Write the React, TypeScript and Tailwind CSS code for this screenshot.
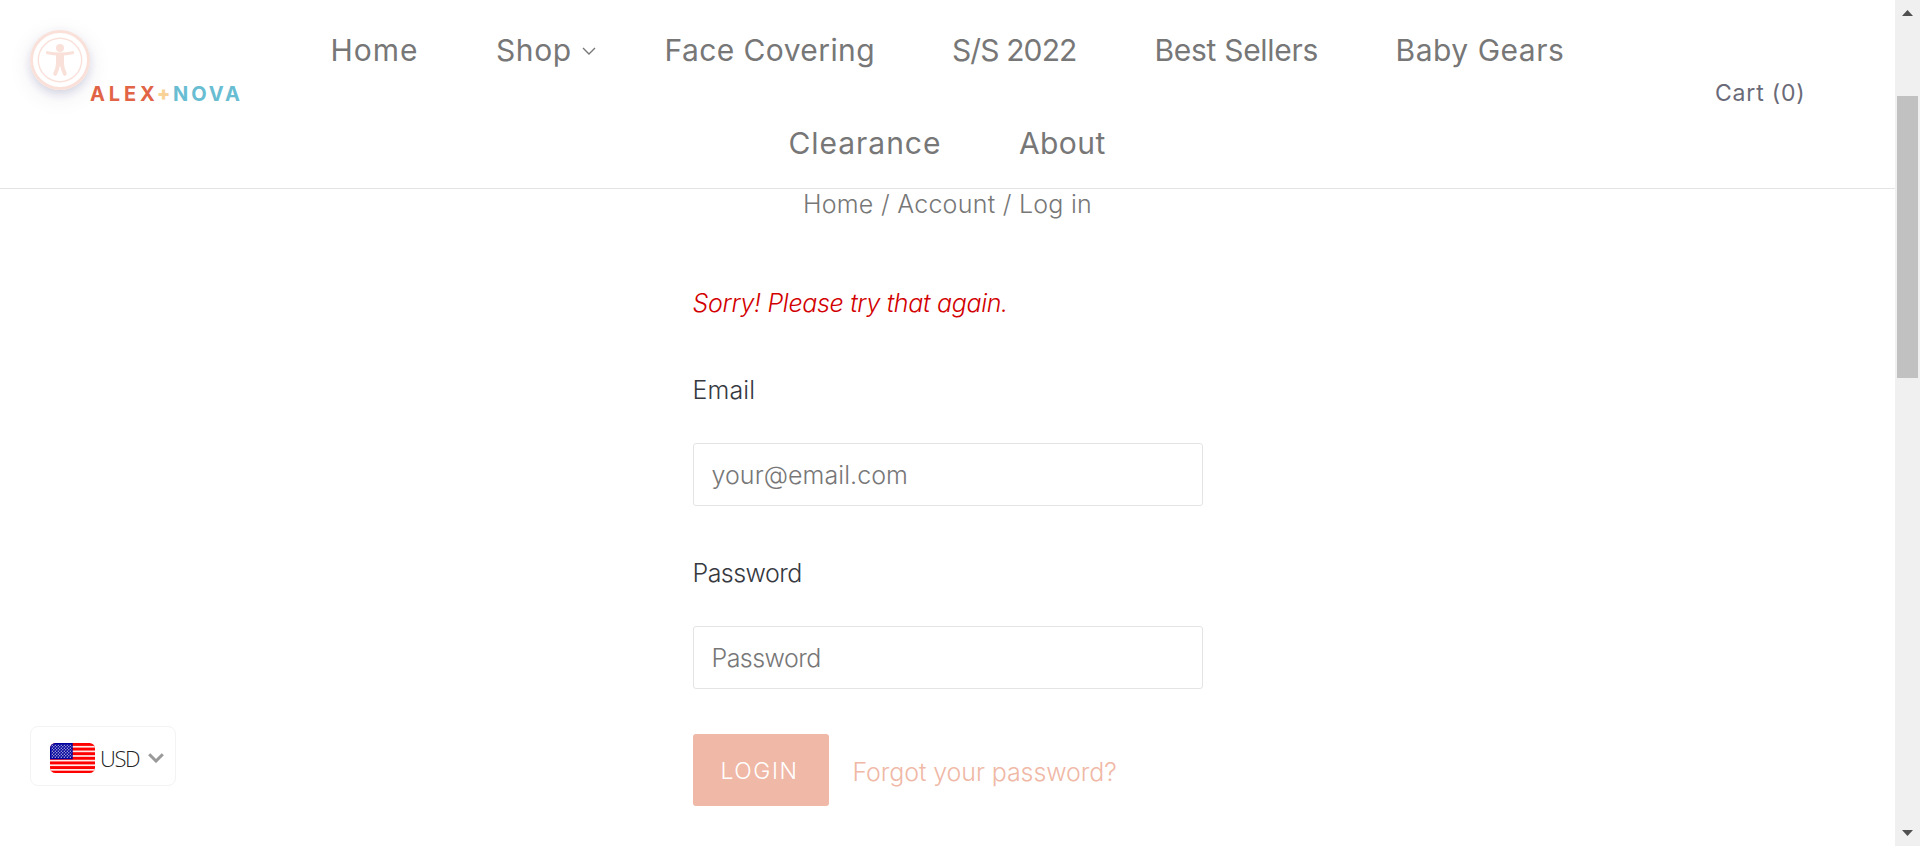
import React from "react";

const primaryLinks = [
  { label: "Home", cls: "w-[166px] pl-[1.5px] tracking-[1px]" },
  { label: "Shop", cls: "w-[168px] pl-[1px] tracking-[0.6px]", menu: true },
  { label: "Face Covering", cls: "w-[289px] pl-[1.5px] tracking-[0.42px]" },
  { label: "S/S 2022", cls: "w-[201px] tracking-[-0.89px]" },
  { label: "Best Sellers", cls: "w-[241px] pl-[1.5px] tracking-[-0.3px]" },
  { label: "Baby Gears", cls: "w-[172px] pl-[1.5px] tracking-[0.52px]" },
];

function AccessibilityButton() {
  return (
    <button
      aria-label="Accessibility"
      className="absolute left-[30px] top-[30px] size-[60px] rounded-full bg-white shadow-[0_4px_8px_rgba(60,60,130,0.16),0_6px_24px_rgba(60,60,110,0.09)]"
    >
      <svg viewBox="0 0 60 60" className="size-[60px]" fill="none" stroke="#f9e1da">
        <circle cx="30" cy="30" r="28.5" strokeWidth="3" />
        <circle cx="30" cy="30" r="21.7" strokeWidth="1.4" />
        <circle cx="30" cy="18" r="4" fill="#f9e1da" stroke="none" />
        <path d="M17.5 22.7 Q30 25.3 42.5 22.7" strokeWidth="3.2" strokeLinecap="round" />
        <path d="M26 23.5h8v11l-1.5 2h-5l-1.5-2z" fill="#f9e1da" stroke="none" />
        <path d="M28 33.5Q27.8 39 25.2 43.8M32 33.5Q32.2 39 34.8 43.8" strokeWidth="4" strokeLinecap="round" />
      </svg>
    </button>
  );
}

function Flag() {
  return (
    <svg viewBox="0 0 45 30" className="h-[30px] w-[45px] shrink-0">
      <defs>
        <clipPath id="flag-round">
          <rect width="45" height="30" rx="5.5" />
        </clipPath>
        <pattern id="flag-stars" width="3" height="3" patternUnits="userSpaceOnUse">
          <circle cx="0.8" cy="0.8" r="0.7" fill="#bcbce0" />
          <circle cx="2.3" cy="2.3" r="0.7" fill="#bcbce0" />
        </pattern>
      </defs>
      <g clipPath="url(#flag-round)">
        <rect width="45" height="30" fill="#ff0000" />
        {[0, 1, 2, 3, 4, 5].map((i) => (
          <rect key={i} y={2.9 + i * 4.62} width="45" height="1.7" fill="#ffe9e9" />
        ))}
        <rect width="22.7" height="16.3" fill="#00009c" />
        <rect x="1.2" y="1.5" width="20.3" height="13.5" fill="url(#flag-stars)" />
      </g>
    </svg>
  );
}

function Scrollbar() {
  return (
    <div className="flex w-[25px] shrink-0 flex-col items-center bg-[#f0f0f0]">
      <svg viewBox="0 0 11 6" className="mt-[10px] h-[6px] w-[11px]" fill="#505050">
        <path d="M5.5 0 11 6H0z" />
      </svg>
      <div className="mt-[80px] h-[282px] w-[21px] bg-[#c1c1c1]" />
      <svg viewBox="0 0 11 6" className="mb-[10px] mt-auto h-[6px] w-[11px]" fill="#505050">
        <path d="M5.5 6 11 0H0z" />
      </svg>
    </div>
  );
}

export default function App() {
  return (
    <div className="relative flex h-[846px] w-full overflow-hidden bg-white font-['Inter',sans-serif]">
      <div className="flex min-w-0 flex-1 flex-col">
        <header className="flex h-[189px] shrink-0 border-b border-[#e3e4e4] bg-white">
          <div className="flex w-[329px] items-center pl-[90px] text-[20px] font-bold leading-[30px]">
            <span className="w-[67px] tracking-[3.9px] text-[#e26446]">ALEX</span>
            <span className="w-[16px] text-[19px] font-black text-[#f8d296]">+</span>
            <span className="tracking-[2.9px] text-[#69bdd2]">NOVA</span>
          </div>
          <nav className="w-[1237px] pt-[3px] text-[30px] leading-[94px] text-[#777777]">
            <ul className="flex h-[93px]">
              {primaryLinks.map((l) => (
                <li key={l.label} className={`flex shrink-0 items-center whitespace-nowrap ${l.cls}`}>
                  {l.label}
                  {l.menu && (
                    <svg viewBox="0 0 14 8" className="ml-[10px] mt-[2px] h-[8px] w-[14px]" fill="none" stroke="#777777" strokeWidth="1.4">
                      <path d="M1 1l6 6 6-6" />
                    </svg>
                  )}
                </li>
              ))}
            </ul>
            <ul className="flex h-[92px] pl-[459px]">
              <li className="w-[231px] pl-[0.5px] tracking-[0.95px]">Clearance</li>
              <li className="tracking-[0.4px]">About</li>
            </ul>
          </nav>
          <div className="flex flex-1 items-center pl-[149px] text-[23px] leading-[30px] tracking-[0.8px] text-[#6a6a78]">
            <span className="-mt-[2px]">Cart (0)</span>
          </div>
        </header>

        <main className="flex flex-col items-center text-[25px] font-light leading-[30px]">
          <p className="tracking-[0.26px] text-[#777777]">Home / Account / Log in</p>
          <form className="mt-[69px] flex w-[510px] flex-col">
            <em className="tracking-[-0.32px] text-[#d20000]">Sorry! Please try that again.</em>
            <label className="mt-[57px] tracking-[0.1px] text-[#36393f]">Email</label>
            <input
              placeholder="your@email.com"
              className="mt-[38px] h-[63px] w-[510px] rounded-[3px] border border-[#e3e4e4] pl-[18px] tracking-[0.06px] placeholder:text-[#777777]"
            />
            <label className="mt-[52px] tracking-[-0.55px] text-[#36393f]">Password</label>
            <input
              type="password"
              placeholder="Password"
              className="mt-[38px] h-[63px] w-[510px] rounded-[3px] border border-[#e3e4e4] pl-[18px] tracking-[-0.55px] placeholder:text-[#777777]"
            />
            <div className="mt-[45px] flex items-center">
              <button className="h-[72px] w-[136px] rounded-[3px] bg-[#f0b8a6] pl-[28px] pt-[1px] text-left text-[23px] font-light tracking-[1.5px] text-white">
                LOGIN
              </button>
              <a className="ml-[24px] pt-[3px] tracking-[-0.1px] text-[#f0b8a6]">Forgot your password?</a>
            </div>
          </form>
        </main>
      </div>
      <Scrollbar />

      <AccessibilityButton />
      <div className="absolute left-[30px] top-[726px] flex h-[60px] w-[146px] items-center rounded-[8px] border border-[#f3f3f3] bg-white pl-[19px] pt-[4px]">
        <Flag />
        <span className="ml-[5px] w-[48px] font-['Open_Sans',sans-serif] text-[22px] font-light leading-[30px] tracking-[-1.4px] text-[#222222]">USD</span>
        <svg viewBox="0 0 16 10" className="h-[10px] w-[16px] shrink-0" fill="none" stroke="#999999" strokeWidth="3">
          <path d="M1.2 1.2 8 8l6.8-6.8" />
        </svg>
      </div>
    </div>
  );
}
